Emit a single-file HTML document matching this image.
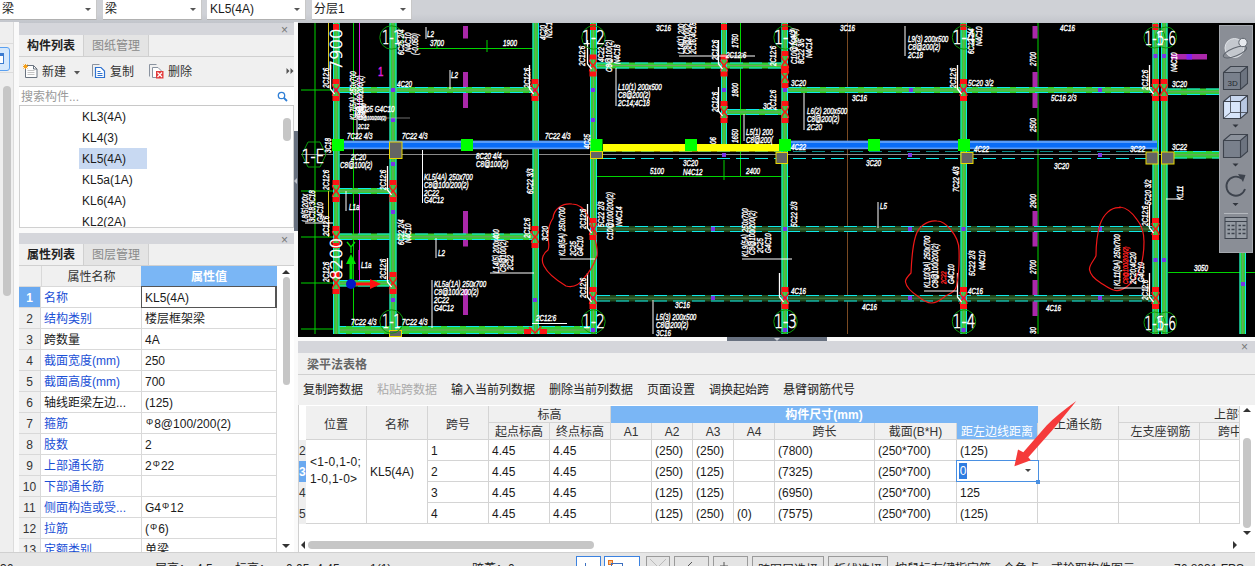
<!DOCTYPE html>
<html><head><meta charset="utf-8"><title>GTJ</title>
<style>
*{box-sizing:border-box;margin:0;padding:0}
html,body{width:1255px;height:566px;overflow:hidden}
body{background:#f0f0f0;font-family:"Liberation Sans","Noto Sans CJK SC",sans-serif;font-size:12px;color:#1a1a1a;position:relative}
.a{position:absolute}
.dd{position:absolute;top:0;height:20px;background:#fff;border-bottom:1px solid #b0b0b0;border-right:1px solid #c8c8c8;font-size:12px;line-height:19px;padding-left:2px;white-space:nowrap}
.dd i{position:absolute;right:5px;top:8px;width:0;height:0;border-left:3px solid transparent;border-right:3px solid transparent;border-top:3px solid #555}
.x{position:absolute;font-size:12px;color:#777;line-height:10px}
.tab{position:absolute;font-size:12px;line-height:23px;text-align:center;white-space:nowrap}
.li{position:absolute;left:82px;font-size:12px;line-height:23px;height:21px;white-space:nowrap}
.prow{position:absolute;left:19px;width:258px;height:21px;border-bottom:1px solid #d9d9d9;border-right:1px solid #d9d9d9;background:#fff;line-height:22px;font-size:12px}
.prow b{position:absolute;left:0;top:0;width:22px;height:20px;line-height:22px;overflow:hidden;background:#f0f0f0;border-right:1px solid #d9d9d9;text-align:center;font-weight:normal;color:#333}
.prow span{position:absolute;left:25px;top:0;width:97px;white-space:nowrap}
.prow u{position:absolute;left:122px;top:0;height:20px;width:1px;background:#d9d9d9}
.prow em{position:absolute;left:126px;top:0;font-style:normal;white-space:nowrap}
.bl{color:#1a4fd6}
.rb{font-size:9px;position:relative;top:-3px;margin:0 1px}
.tb{position:absolute;top:380px;line-height:20px;white-space:nowrap;color:#222}
.hc{position:absolute;background:#f0f0f0;border-right:1px solid #d4d4d4;border-bottom:1px solid #d4d4d4;text-align:center;white-space:nowrap;color:#333;overflow:hidden}
.c{position:absolute;background:#fff;border-right:1px solid #d4d4d4;border-bottom:1px solid #d4d4d4;line-height:22px;padding-left:3px;white-space:nowrap;overflow:hidden}
.rn{position:absolute;left:299px;width:7px;height:21px;line-height:22px;background:#eee;font-size:12px;color:#333;overflow:hidden}
.sb{position:absolute;top:552px;height:14px;line-height:34px;overflow:hidden;white-space:nowrap;color:#222;font-size:12px}
.sbtn{position:absolute;top:556px;height:12px;border:1px solid #9a9a9a;background:#e4e4e4}
svg text{font-family:"Liberation Sans","Noto Sans CJK SC",sans-serif}
</style></head><body>
<div class="a" style="left:0;top:0;width:1255px;height:23px;background:linear-gradient(#cfd1d6,#cfd1d6 60%,#c2c5cb)"></div>
<div class="dd" style="left:0;width:97px">梁<i></i></div>
<div class="dd" style="left:103px;width:99px">梁<i></i></div>
<div class="dd" style="left:207px;width:99px;padding-left:3px">KL5(4A)<i></i></div>
<div class="dd" style="left:312px;width:100px">分层1<i></i></div>
<div class="a" style="left:0;top:22px;width:14px;height:530px;background:#efefef;border-right:1px solid #dcdcdc"></div>
<div class="a" style="left:14px;top:22px;width:5px;height:530px;background:#fafafa"></div>
<div class="a" style="left:0;top:43px;width:13px;height:1px;background:#dcdcdc"></div>
<div class="a" style="left:0;top:72px;width:13px;height:1px;background:#dcdcdc"></div>
<div class="a" style="left:-6px;top:47px;width:16px;height:24px;border:1px solid #5aa0f0;border-radius:3px;background:#d5e8fc"></div>
<div class="a" style="left:-4px;top:53px;width:8px;height:11px;border:1px solid #3b7bd0;border-top:3px solid #3b7bd0;background:#fff"></div>
<div class="a" style="left:3px;top:86px;width:8px;height:210px;border-radius:4px;background:#c6c6c6"></div>
<div class="a" style="left:19px;top:23px;width:275px;height:12px;background:#d5d6db"></div>
<div class="x" style="left:281px;top:25px">×</div>
<div class="a" style="left:19px;top:35px;width:275px;height:22px;background:#f0f0f0;border-bottom:1px solid #d0d0d0"></div>
<div class="tab" style="left:19px;top:35px;width:64px;font-weight:bold;color:#222">构件列表</div>
<div class="tab" style="left:83px;top:35px;width:66px;height:21px;background:#e4e4e4;color:#8a8a8a;border-left:1px solid #d0d0d0;border-right:1px solid #d0d0d0">图纸管理</div>
<div class="a" style="left:19px;top:57px;width:275px;height:30px;background:#f0f0f0;border-bottom:1px solid #d0d0d0"></div>
<svg class="a" style="left:19px;top:57px" width="275" height="30" viewBox="0 0 275 30"><path d="M6.5 8.5h8l3.500 3.500v8.500h-11.500z" fill="#fdfdfd" stroke="#6a7480" stroke-width="1"/><path d="M14.500 8.500v3.500h3.500" fill="none" stroke="#6a7480"/><path d="M8.5 13.500h7M8.5 15.500h7M8.5 17.500h7" stroke="#c4c4c4" stroke-width="1"/><path d="M4.500 7.500l4 4M8.500 7.500l-4 4M6.500 7v5M4 9.500h5" stroke="#f5a01a" stroke-width="1"/><path d="M55 14h6l-3 3.500z" fill="#555"/><path d="M73.500 19.500v-12h7" fill="none" stroke="#8a93a0" stroke-width="1"/><path d="M76.500 10.500h5.500l3.500 3.500v6.500h-9z" fill="#fff" stroke="#2f72d0" stroke-width="1.200"/><path d="M78.500 14.500h3M78.500 16.500h5M78.500 18.500h5" stroke="#2f72d0" stroke-width="1"/><path d="M130.500 19.500v-12h7" fill="none" stroke="#8a93a0" stroke-width="1"/><path d="M133.500 10.500h5.500l3.500 3.500v6.500h-9z" fill="#fff" stroke="#8a93a0" stroke-width="1"/><rect x="137" y="14" width="7.500" height="7.500" fill="#e23b3b"/><path d="M138.500 15.500l4.500 4.500M143 15.500l-4.500 4.500" stroke="#fff" stroke-width="1.200"/><path d="M267.500 11l3 3-3 3zM271.500 11l3 3-3 3z" fill="#555"/></svg>
<div class="a" style="left:42px;top:62px;line-height:20px;color:#333">新建</div>
<div class="a" style="left:110px;top:62px;line-height:20px;color:#333">复制</div>
<div class="a" style="left:168px;top:62px;line-height:20px;color:#333">删除</div>
<div class="a" style="left:19px;top:87px;width:275px;height:19px;background:#fff;border-bottom:1px solid #c8c8c8;color:#999;line-height:20px;padding-left:2px">搜索构件...</div>
<svg class="a" style="left:274px;top:89px" width="16" height="16" viewBox="0 0 16 16"><circle cx="7.500" cy="6.500" r="3.200" fill="none" stroke="#2f7fd6" stroke-width="1.300"/><path d="M10 9l3 3" stroke="#2f7fd6" stroke-width="1.800"/></svg>
<div class="a" style="left:19px;top:106px;width:275px;height:122px;background:#fff;border:1px solid #d0d0d0;border-top:0"></div>
<div class="a" style="left:79px;top:148px;width:68px;height:21px;background:#c8d9f2"></div>
<div class="li" style="top:106px">KL3(4A)</div>
<div class="li" style="top:127px">KL4(3)</div>
<div class="li" style="top:148px">KL5(4A)</div>
<div class="li" style="top:169px">KL5a(1A)</div>
<div class="li" style="top:190px">KL6(4A)</div>
<div class="li" style="top:211px;height:16px;overflow:hidden">KL2(2A)</div>
<div class="a" style="left:283px;top:118px;width:8px;height:23px;border-radius:4px;background:#c6c6c6"></div>
<div class="a" style="left:294px;top:22px;width:4px;height:530px;background:#fafafa"></div>
<div class="a" style="left:294px;top:131px;width:4px;height:100px;background:#687180"></div>
<div class="a" style="left:294px;top:178px;width:0;height:0;border-top:3px solid transparent;border-bottom:3px solid transparent;border-right:3px solid #c0c4cc"></div>
<div class="a" style="left:19px;top:228px;width:275px;height:5px;background:#fafafa"></div>
<div class="a" style="left:19px;top:233px;width:275px;height:11px;background:#d5d6db"></div>
<div class="x" style="left:281px;top:235px">×</div>
<div class="a" style="left:19px;top:244px;width:275px;height:22px;background:#f0f0f0;border-bottom:1px solid #d0d0d0"></div>
<div class="tab" style="left:19px;top:244px;width:64px;font-weight:bold;color:#222">属性列表</div>
<div class="tab" style="left:83px;top:244px;width:66px;height:21px;background:#e4e4e4;color:#8a8a8a;border-left:1px solid #d0d0d0;border-right:1px solid #d0d0d0">图层管理</div>
<div class="a" style="left:19px;top:266px;width:275px;height:286px;background:#fff"></div>
<div class="a" style="left:19px;top:266px;width:258px;height:21px;background:#f0f0f0;border-bottom:1px solid #d9d9d9"></div>
<div class="a" style="left:41px;top:266px;width:100px;height:20px;line-height:22px;text-align:center;border-left:1px solid #d9d9d9;color:#333">属性名称</div>
<div class="a" style="left:141px;top:266px;width:136px;height:20px;line-height:22px;text-align:center;background:#7ab6f5;color:#fff;font-weight:bold">属性值</div>
<div class="prow" style="top:287px"><b style="background:#6aa9f0;color:#fff;font-weight:bold">1</b><span class="bl">名称</span><u></u><em>KL5(4A)</em></div>
<div class="prow" style="top:308px"><b>2</b><span class="bl">结构类别</span><u></u><em>楼层框架梁</em></div>
<div class="prow" style="top:329px"><b>3</b><span>跨数量</span><u></u><em>4A</em></div>
<div class="prow" style="top:350px"><b>4</b><span class="bl">截面宽度(mm)</span><u></u><em>250</em></div>
<div class="prow" style="top:371px"><b>5</b><span class="bl">截面高度(mm)</span><u></u><em>700</em></div>
<div class="prow" style="top:392px"><b>6</b><span>轴线距梁左边...</span><u></u><em>(125)</em></div>
<div class="prow" style="top:413px"><b>7</b><span class="bl">箍筋</span><u></u><em><i class="rb" style="font-style:normal">Φ</i>8@100/200(2)</em></div>
<div class="prow" style="top:434px"><b>8</b><span class="bl">肢数</span><u></u><em>2</em></div>
<div class="prow" style="top:455px"><b>9</b><span class="bl">上部通长筋</span><u></u><em>2<i class="rb" style="font-style:normal">Φ</i>22</em></div>
<div class="prow" style="top:476px"><b>10</b><span class="bl">下部通长筋</span><u></u><em></em></div>
<div class="prow" style="top:497px"><b>11</b><span class="bl">侧面构造或受...</span><u></u><em>G4<i class="rb" style="font-style:normal">Φ</i>12</em></div>
<div class="prow" style="top:518px"><b>12</b><span class="bl">拉筋</span><u></u><em>(<i class="rb" style="font-style:normal">Φ</i>6)</em></div>
<div class="prow" style="top:539px"><b>13</b><span class="bl">定额类别</span><u></u><em>单梁</em></div>
<div class="a" style="left:141px;top:286px;width:136px;height:22px;border:1px solid #555;border-right-width:2px"></div>
<div class="a" style="left:282px;top:270px;width:0;height:0;border-left:4px solid transparent;border-right:4px solid transparent;border-bottom:4px solid #333"></div>
<div class="a" style="left:283px;top:277px;width:7px;height:108px;border-radius:4px;background:#c6c6c6"></div>
<div class="a" style="left:282px;top:544px;width:0;height:0;border-left:4px solid transparent;border-right:4px solid transparent;border-top:4px solid #333"></div>
<svg class="a" style="left:298px;top:23px" width="957" height="314" viewBox="298 23 957 314">
<style>.th{font-family:"DejaVu Sans Light","DejaVu Sans","Liberation Sans",sans-serif;font-weight:200}</style>
<rect x="298" y="23" width="957" height="314" fill="#000"/>
<path d="M315.0 23.0L315.0 334.0" stroke="#00d400" stroke-width="1"/>
<path d="M353.5 23.0L353.5 334.0" stroke="#00d400" stroke-width="1"/>
<path d="M1038.0 23.0L1038.0 334.0" stroke="#00d400" stroke-width="1"/>
<path d="M301.0 90.0L333.0 90.0" stroke="#00d400" stroke-width="1"/>
<path d="M301.0 191.0L333.0 191.0" stroke="#00d400" stroke-width="1"/>
<path d="M301.0 237.0L333.0 237.0" stroke="#00d400" stroke-width="1"/>
<path d="M301.0 283.0L333.0 283.0" stroke="#00d400" stroke-width="1"/>
<path d="M301.0 329.0L333.0 329.0" stroke="#00d400" stroke-width="1"/>
<path d="M418.0 48.5L533.0 48.5" stroke="#00d400" stroke-width="1"/>
<path d="M437.0 40.0L437.0 48.0" stroke="#00d400" stroke-width="1"/>
<path d="M487.0 40.0L487.0 52.0" stroke="#00d400" stroke-width="1"/>
<path d="M740.5 23.0L740.5 176.0" stroke="#00d400" stroke-width="1"/>
<path d="M597.0 176.5L790.0 176.5" stroke="#00d400" stroke-width="1"/>
<path d="M724.0 160.0L724.0 180.0" stroke="#00d400" stroke-width="1"/>
<path d="M1168.0 272.5L1255.0 272.5" stroke="#00d400" stroke-width="1"/>
<path d="M1010.0 154.5L1038.0 154.5" stroke="#00d400" stroke-width="1"/>
<path d="M847.5 23.0L847.5 334.0" stroke="#7a4a22" stroke-width="1"/>
<path d="M301.0 154.5L1219.0 154.5" stroke="#8a8a8a" stroke-width="1"/>
<path d="M359.5 23.0L359.5 119.0" stroke="#e020e0" stroke-width="1"/>
<path d="M359.5 194.0L359.5 280.0" stroke="#e020e0" stroke-width="1"/>
<rect x="463.0" y="26.0" width="5.0" height="12.5" fill="#aa28aa"/>
<rect x="463.0" y="72.0" width="5.0" height="36.0" fill="#aa28aa"/>
<rect x="463.0" y="211.0" width="5.0" height="35.5" fill="#aa28aa"/>
<rect x="463.0" y="289.0" width="5.0" height="26.0" fill="#aa28aa"/>
<rect x="1032.5" y="26.0" width="5.0" height="12.5" fill="#aa28aa"/>
<rect x="1032.5" y="72.0" width="5.0" height="36.0" fill="#aa28aa"/>
<rect x="1032.5" y="211.0" width="5.0" height="35.5" fill="#aa28aa"/>
<rect x="1032.5" y="280.0" width="5.0" height="36.0" fill="#aa28aa"/>
<rect x="1171.0" y="54.0" width="36.0" height="5.5" fill="#aa28aa"/>
<rect x="1186.5" y="54.0" width="5.5" height="5.5" fill="#8020f0"/>
<path d="M603.0 151.5L1146.0 151.5" stroke="#0a8a8a" stroke-width="1" stroke-dasharray="13 6"/>
<path d="M603.0 158.5L1146.0 158.5" stroke="#10e8e8" stroke-width="1" stroke-dasharray="13 6"/>
<rect x="339.0" y="87.0" width="194.0" height="6.0" fill="#32cd32"/>
<path d="M339.0 87.5H533.0M339.0 92.5H533.0" stroke="#10e8e8" stroke-width="1" stroke-dasharray="13 6"/>
<path d="M339.0 90.0H533.0" stroke="#7a9a6a" stroke-width="1"/>
<rect x="597.0" y="62.5" width="185.0" height="6.0" fill="#32cd32"/>
<path d="M597.0 63.0H782.0M597.0 68.0H782.0" stroke="#10e8e8" stroke-width="1" stroke-dasharray="13 6"/>
<path d="M597.0 65.5H782.0" stroke="#7a9a6a" stroke-width="1"/>
<rect x="727.0" y="109.0" width="55.0" height="6.0" fill="#32cd32"/>
<path d="M727.0 109.5H782.0M727.0 114.5H782.0" stroke="#10e8e8" stroke-width="1" stroke-dasharray="13 6"/>
<path d="M727.0 112.0H782.0" stroke="#7a9a6a" stroke-width="1"/>
<rect x="788.0" y="87.0" width="364.0" height="6.0" fill="#32cd32"/>
<path d="M788.0 87.5H1152.0M788.0 92.5H1152.0" stroke="#10e8e8" stroke-width="1" stroke-dasharray="13 6"/>
<path d="M788.0 90.0H1152.0" stroke="#7a9a6a" stroke-width="1"/>
<rect x="1168.0" y="88.5" width="51.0" height="6.5" fill="#32cd32"/>
<path d="M1168.0 89.0H1219.0M1168.0 94.5H1219.0" stroke="#10e8e8" stroke-width="1" stroke-dasharray="13 6"/>
<path d="M1168.0 91.8H1219.0" stroke="#7a9a6a" stroke-width="1"/>
<rect x="339.0" y="188.0" width="50.0" height="6.0" fill="#32cd32"/>
<path d="M339.0 188.5H389.0M339.0 193.5H389.0" stroke="#10e8e8" stroke-width="1" stroke-dasharray="13 6"/>
<path d="M339.0 191.0H389.0" stroke="#7a9a6a" stroke-width="1"/>
<rect x="339.0" y="233.5" width="194.0" height="6.5" fill="#32cd32"/>
<path d="M339.0 234.0H533.0M339.0 239.5H533.0" stroke="#10e8e8" stroke-width="1" stroke-dasharray="13 6"/>
<path d="M339.0 236.8H533.0" stroke="#7a9a6a" stroke-width="1"/>
<rect x="339.0" y="280.0" width="50.0" height="6.5" fill="#32cd32"/>
<path d="M339.0 280.5H389.0M339.0 286.0H389.0" stroke="#10e8e8" stroke-width="1" stroke-dasharray="13 6"/>
<path d="M339.0 283.2H389.0" stroke="#7a9a6a" stroke-width="1"/>
<rect x="333.0" y="326.0" width="264.0" height="8.0" fill="#32cd32"/>
<path d="M333.0 326.5H597.0M333.0 333.5H597.0" stroke="#10e8e8" stroke-width="1" stroke-dasharray="13 6"/>
<path d="M333.0 330.0H597.0" stroke="#7a9a6a" stroke-width="1"/>
<rect x="597.0" y="226.0" width="555.0" height="6.0" fill="#1e4a1e"/>
<path d="M597.0 226.5H1152.0M597.0 231.5H1152.0" stroke="#10e8e8" stroke-width="1" stroke-dasharray="13 6"/>
<path d="M597.0 229.0H1152.0" stroke="#4a7a40" stroke-width="1"/>
<rect x="597.0" y="295.0" width="555.0" height="6.5" fill="#1e4a1e"/>
<path d="M597.0 295.5H1152.0M597.0 301.0H1152.0" stroke="#10e8e8" stroke-width="1" stroke-dasharray="13 6"/>
<path d="M597.0 298.2H1152.0" stroke="#4a7a40" stroke-width="1"/>
<rect x="1174.0" y="151.0" width="45.0" height="7.5" fill="#32cd32"/>
<path d="M1174.0 151.5H1219.0M1174.0 158.0H1219.0" stroke="#10e8e8" stroke-width="1" stroke-dasharray="13 6"/>
<path d="M1174.0 154.8H1219.0" stroke="#7a9a6a" stroke-width="1"/>
<rect x="333.0" y="23.0" width="6.5" height="311.0" fill="#32cd32"/>
<path d="M333.5 23.0V334.0M339.0 23.0V334.0" stroke="#10e8e8" stroke-width="1"/>
<path d="M336.2 23.0V334.0" stroke="#7a9a6a" stroke-width="1"/>
<rect x="389.5" y="23.0" width="7.0" height="311.0" fill="#32cd32"/>
<path d="M390.0 23.0V334.0M396.0 23.0V334.0" stroke="#10e8e8" stroke-width="1"/>
<path d="M393.0 23.0V334.0" stroke="#7a9a6a" stroke-width="1"/>
<rect x="532.5" y="23.0" width="6.5" height="311.0" fill="#32cd32"/>
<path d="M533.0 23.0V334.0M538.5 23.0V334.0" stroke="#10e8e8" stroke-width="1"/>
<path d="M535.8 23.0V334.0" stroke="#7a9a6a" stroke-width="1"/>
<rect x="590.0" y="23.0" width="7.0" height="311.0" fill="#32cd32"/>
<path d="M590.5 23.0V334.0M596.5 23.0V334.0" stroke="#10e8e8" stroke-width="1"/>
<path d="M593.5 23.0V334.0" stroke="#7a9a6a" stroke-width="1"/>
<rect x="721.0" y="23.0" width="6.0" height="122.0" fill="#32cd32"/>
<path d="M721.5 23.0V145.0M726.5 23.0V145.0" stroke="#10e8e8" stroke-width="1"/>
<path d="M724.0 23.0V145.0" stroke="#7a9a6a" stroke-width="1"/>
<rect x="781.5" y="23.0" width="6.5" height="311.0" fill="#32cd32"/>
<path d="M782.0 23.0V334.0M787.5 23.0V334.0" stroke="#10e8e8" stroke-width="1"/>
<path d="M784.8 23.0V334.0" stroke="#7a9a6a" stroke-width="1"/>
<rect x="960.5" y="23.0" width="6.5" height="311.0" fill="#32cd32"/>
<path d="M961.0 23.0V334.0M966.5 23.0V334.0" stroke="#10e8e8" stroke-width="1"/>
<path d="M963.8 23.0V334.0" stroke="#7a9a6a" stroke-width="1"/>
<rect x="1152.5" y="23.0" width="6.5" height="311.0" fill="#32cd32"/>
<path d="M1153.0 23.0V334.0M1158.5 23.0V334.0" stroke="#10e8e8" stroke-width="1"/>
<path d="M1155.8 23.0V334.0" stroke="#7a9a6a" stroke-width="1"/>
<rect x="1161.0" y="23.0" width="6.5" height="311.0" fill="#32cd32"/>
<path d="M1161.5 23.0V334.0M1167.0 23.0V334.0" stroke="#10e8e8" stroke-width="1"/>
<path d="M1164.2 23.0V334.0" stroke="#7a9a6a" stroke-width="1"/>
<rect x="1239.5" y="253.0" width="6.5" height="81.0" fill="#32cd32"/>
<path d="M1240.0 253.0V334.0M1245.5 253.0V334.0" stroke="#10e8e8" stroke-width="1"/>
<path d="M1242.8 253.0V334.0" stroke="#7a9a6a" stroke-width="1"/>
<rect x="339.0" y="140.6" width="250.0" height="8.6" fill="#5a9bf5"/>
<rect x="339.0" y="143.0" width="250.0" height="4.5" fill="#0a6cf5"/>
<rect x="788.0" y="140.6" width="369.0" height="8.6" fill="#5a9bf5"/>
<rect x="788.0" y="143.0" width="369.0" height="4.5" fill="#0a6cf5"/>
<rect x="603.0" y="144.0" width="178.0" height="7.5" fill="#ffff00"/>
<rect x="334.0" y="88.0" width="4.0" height="4.0" fill="#7a35e6"/>
<rect x="391.0" y="88.0" width="4.0" height="4.0" fill="#7a35e6"/>
<rect x="391.0" y="118.0" width="4.0" height="4.0" fill="#7a35e6"/>
<rect x="391.0" y="162.0" width="4.0" height="4.0" fill="#7a35e6"/>
<rect x="533.0" y="88.0" width="4.0" height="4.0" fill="#7a35e6"/>
<rect x="591.0" y="88.0" width="4.0" height="4.0" fill="#7a35e6"/>
<rect x="591.0" y="118.0" width="4.0" height="4.0" fill="#7a35e6"/>
<rect x="722.0" y="88.0" width="4.0" height="4.0" fill="#7a35e6"/>
<rect x="783.0" y="88.0" width="4.0" height="4.0" fill="#7a35e6"/>
<rect x="961.5" y="88.0" width="4.0" height="4.0" fill="#7a35e6"/>
<rect x="909.0" y="88.0" width="4.0" height="4.0" fill="#7a35e6"/>
<rect x="1153.5" y="54.0" width="4.0" height="4.0" fill="#7a35e6"/>
<rect x="1162.0" y="54.0" width="4.0" height="4.0" fill="#7a35e6"/>
<rect x="391.0" y="210.0" width="4.0" height="4.0" fill="#7a35e6"/>
<rect x="391.0" y="298.0" width="4.0" height="4.0" fill="#7a35e6"/>
<rect x="533.0" y="298.0" width="4.0" height="4.0" fill="#7a35e6"/>
<rect x="591.0" y="227.0" width="4.0" height="4.0" fill="#7a35e6"/>
<rect x="591.0" y="296.0" width="4.0" height="4.0" fill="#7a35e6"/>
<rect x="591.0" y="328.0" width="4.0" height="4.0" fill="#7a35e6"/>
<rect x="711.0" y="227.0" width="4.0" height="4.0" fill="#7a35e6"/>
<rect x="711.0" y="296.0" width="4.0" height="4.0" fill="#7a35e6"/>
<rect x="783.0" y="227.0" width="4.0" height="4.0" fill="#7a35e6"/>
<rect x="783.0" y="296.0" width="4.0" height="4.0" fill="#7a35e6"/>
<rect x="783.0" y="328.0" width="4.0" height="4.0" fill="#7a35e6"/>
<rect x="908.0" y="227.0" width="4.0" height="4.0" fill="#7a35e6"/>
<rect x="908.0" y="296.0" width="4.0" height="4.0" fill="#7a35e6"/>
<rect x="961.5" y="227.0" width="4.0" height="4.0" fill="#7a35e6"/>
<rect x="961.5" y="296.0" width="4.0" height="4.0" fill="#7a35e6"/>
<rect x="961.5" y="328.0" width="4.0" height="4.0" fill="#7a35e6"/>
<rect x="1098.0" y="227.0" width="4.0" height="4.0" fill="#7a35e6"/>
<rect x="1098.0" y="296.0" width="4.0" height="4.0" fill="#7a35e6"/>
<rect x="1153.5" y="258.0" width="4.0" height="4.0" fill="#7a35e6"/>
<rect x="1162.0" y="258.0" width="4.0" height="4.0" fill="#7a35e6"/>
<rect x="908.0" y="153.0" width="4.0" height="4.0" fill="#7a35e6"/>
<rect x="591.0" y="153.0" width="4.0" height="4.0" fill="#7a35e6"/>
<rect x="722.0" y="153.0" width="4.0" height="4.0" fill="#7a35e6"/>
<rect x="1098.0" y="153.0" width="4.0" height="4.0" fill="#7a35e6"/>
<rect x="1241.0" y="282.0" width="4.0" height="4.0" fill="#7a35e6"/>
<rect x="1098.0" y="88.0" width="4.0" height="4.0" fill="#7a35e6"/>
<rect x="332.5" y="79.0" width="7.0" height="5.0" fill="#ff1414"/>
<rect x="332.5" y="96.0" width="7.0" height="5.0" fill="#ff1414"/>
<path d="M332.5 84.0C332.5 90.0 339.5 90.0 339.5 96.0M339.5 84.0C339.5 90.0 332.5 90.0 332.5 96.0" stroke="#ff1414" stroke-width="1.300" fill="none"/>
<rect x="332.5" y="180.0" width="7.0" height="5.0" fill="#ff1414"/>
<rect x="332.5" y="197.0" width="7.0" height="5.0" fill="#ff1414"/>
<path d="M332.5 185.0C332.5 191.0 339.5 191.0 339.5 197.0M339.5 185.0C339.5 191.0 332.5 191.0 332.5 197.0" stroke="#ff1414" stroke-width="1.300" fill="none"/>
<rect x="332.5" y="226.0" width="7.0" height="5.0" fill="#ff1414"/>
<rect x="332.5" y="243.0" width="7.0" height="5.0" fill="#ff1414"/>
<path d="M332.5 231.0C332.5 237.0 339.5 237.0 339.5 243.0M339.5 231.0C339.5 237.0 332.5 237.0 332.5 243.0" stroke="#ff1414" stroke-width="1.300" fill="none"/>
<rect x="389.5" y="180.0" width="7.0" height="5.0" fill="#ff1414"/>
<rect x="389.5" y="197.0" width="7.0" height="5.0" fill="#ff1414"/>
<path d="M389.5 185.0C389.5 191.0 396.5 191.0 396.5 197.0M396.5 185.0C396.5 191.0 389.5 191.0 389.5 197.0" stroke="#ff1414" stroke-width="1.300" fill="none"/>
<rect x="389.5" y="272.0" width="7.0" height="5.0" fill="#ff1414"/>
<rect x="389.5" y="289.0" width="7.0" height="5.0" fill="#ff1414"/>
<path d="M389.5 277.0C389.5 283.0 396.5 283.0 396.5 289.0M396.5 277.0C396.5 283.0 389.5 283.0 389.5 289.0" stroke="#ff1414" stroke-width="1.300" fill="none"/>
<rect x="332.5" y="272.0" width="7.0" height="5.0" fill="#ff1414"/>
<rect x="332.5" y="289.0" width="7.0" height="5.0" fill="#ff1414"/>
<path d="M332.5 277.0C332.5 283.0 339.5 283.0 339.5 289.0M339.5 277.0C339.5 283.0 332.5 283.0 332.5 289.0" stroke="#ff1414" stroke-width="1.300" fill="none"/>
<rect x="531.5" y="79.0" width="7.0" height="5.0" fill="#ff1414"/>
<rect x="531.5" y="96.0" width="7.0" height="5.0" fill="#ff1414"/>
<path d="M531.5 84.0C531.5 90.0 538.5 90.0 538.5 96.0M538.5 84.0C538.5 90.0 531.5 90.0 531.5 96.0" stroke="#ff1414" stroke-width="1.300" fill="none"/>
<rect x="589.5" y="54.5" width="7.0" height="5.0" fill="#ff1414"/>
<rect x="589.5" y="71.5" width="7.0" height="5.0" fill="#ff1414"/>
<path d="M589.5 59.5C589.5 65.5 596.5 65.5 596.5 71.5M596.5 59.5C596.5 65.5 589.5 65.5 589.5 71.5" stroke="#ff1414" stroke-width="1.300" fill="none"/>
<rect x="720.5" y="54.5" width="7.0" height="5.0" fill="#ff1414"/>
<rect x="720.5" y="71.5" width="7.0" height="5.0" fill="#ff1414"/>
<path d="M720.5 59.5C720.5 65.5 727.5 65.5 727.5 71.5M727.5 59.5C727.5 65.5 720.5 65.5 720.5 71.5" stroke="#ff1414" stroke-width="1.300" fill="none"/>
<rect x="720.5" y="101.0" width="7.0" height="5.0" fill="#ff1414"/>
<rect x="720.5" y="118.0" width="7.0" height="5.0" fill="#ff1414"/>
<path d="M720.5 106.0C720.5 112.0 727.5 112.0 727.5 118.0M727.5 106.0C727.5 112.0 720.5 112.0 720.5 118.0" stroke="#ff1414" stroke-width="1.300" fill="none"/>
<rect x="781.5" y="51.0" width="7.0" height="5.0" fill="#ff1414"/>
<rect x="781.5" y="68.0" width="7.0" height="5.0" fill="#ff1414"/>
<path d="M781.5 56.0C781.5 62.0 788.5 62.0 788.5 68.0M788.5 56.0C788.5 62.0 781.5 62.0 781.5 68.0" stroke="#ff1414" stroke-width="1.300" fill="none"/>
<rect x="781.5" y="66.0" width="7.0" height="5.0" fill="#ff1414"/>
<rect x="781.5" y="83.0" width="7.0" height="5.0" fill="#ff1414"/>
<path d="M781.5 71.0C781.5 77.0 788.5 77.0 788.5 83.0M788.5 71.0C788.5 77.0 781.5 77.0 781.5 83.0" stroke="#ff1414" stroke-width="1.300" fill="none"/>
<rect x="781.5" y="101.0" width="7.0" height="5.0" fill="#ff1414"/>
<rect x="781.5" y="118.0" width="7.0" height="5.0" fill="#ff1414"/>
<path d="M781.5 106.0C781.5 112.0 788.5 112.0 788.5 118.0M788.5 106.0C788.5 112.0 781.5 112.0 781.5 118.0" stroke="#ff1414" stroke-width="1.300" fill="none"/>
<rect x="960.0" y="79.0" width="7.0" height="5.0" fill="#ff1414"/>
<rect x="960.0" y="96.0" width="7.0" height="5.0" fill="#ff1414"/>
<path d="M960.0 84.0C960.0 90.0 967.0 90.0 967.0 96.0M967.0 84.0C967.0 90.0 960.0 90.0 960.0 96.0" stroke="#ff1414" stroke-width="1.300" fill="none"/>
<rect x="1152.0" y="79.0" width="7.0" height="5.0" fill="#ff1414"/>
<rect x="1152.0" y="96.0" width="7.0" height="5.0" fill="#ff1414"/>
<path d="M1152.0 84.0C1152.0 90.0 1159.0 90.0 1159.0 96.0M1159.0 84.0C1159.0 90.0 1152.0 90.0 1152.0 96.0" stroke="#ff1414" stroke-width="1.300" fill="none"/>
<rect x="1160.5" y="79.0" width="7.0" height="5.0" fill="#ff1414"/>
<rect x="1160.5" y="96.0" width="7.0" height="5.0" fill="#ff1414"/>
<path d="M1160.5 84.0C1160.5 90.0 1167.5 90.0 1167.5 96.0M1167.5 84.0C1167.5 90.0 1160.5 90.0 1160.5 96.0" stroke="#ff1414" stroke-width="1.300" fill="none"/>
<rect x="589.5" y="218.0" width="7.0" height="5.0" fill="#ff1414"/>
<rect x="589.5" y="235.0" width="7.0" height="5.0" fill="#ff1414"/>
<path d="M589.5 223.0C589.5 229.0 596.5 229.0 596.5 235.0M596.5 223.0C596.5 229.0 589.5 229.0 589.5 235.0" stroke="#ff1414" stroke-width="1.300" fill="none"/>
<rect x="589.5" y="287.0" width="7.0" height="5.0" fill="#ff1414"/>
<rect x="589.5" y="304.0" width="7.0" height="5.0" fill="#ff1414"/>
<path d="M589.5 292.0C589.5 298.0 596.5 298.0 596.5 304.0M596.5 292.0C596.5 298.0 589.5 298.0 589.5 304.0" stroke="#ff1414" stroke-width="1.300" fill="none"/>
<rect x="531.5" y="226.0" width="7.0" height="5.0" fill="#ff1414"/>
<rect x="531.5" y="243.0" width="7.0" height="5.0" fill="#ff1414"/>
<path d="M531.5 231.0C531.5 237.0 538.5 237.0 538.5 243.0M538.5 231.0C538.5 237.0 531.5 237.0 531.5 243.0" stroke="#ff1414" stroke-width="1.300" fill="none"/>
<rect x="781.5" y="287.0" width="7.0" height="5.0" fill="#ff1414"/>
<rect x="781.5" y="304.0" width="7.0" height="5.0" fill="#ff1414"/>
<path d="M781.5 292.0C781.5 298.0 788.5 298.0 788.5 304.0M788.5 292.0C788.5 298.0 781.5 298.0 781.5 304.0" stroke="#ff1414" stroke-width="1.300" fill="none"/>
<rect x="960.0" y="287.0" width="7.0" height="5.0" fill="#ff1414"/>
<rect x="960.0" y="304.0" width="7.0" height="5.0" fill="#ff1414"/>
<path d="M960.0 292.0C960.0 298.0 967.0 298.0 967.0 304.0M967.0 292.0C967.0 298.0 960.0 298.0 960.0 304.0" stroke="#ff1414" stroke-width="1.300" fill="none"/>
<rect x="1152.0" y="218.0" width="7.0" height="5.0" fill="#ff1414"/>
<rect x="1152.0" y="235.0" width="7.0" height="5.0" fill="#ff1414"/>
<path d="M1152.0 223.0C1152.0 229.0 1159.0 229.0 1159.0 235.0M1159.0 223.0C1159.0 229.0 1152.0 229.0 1152.0 235.0" stroke="#ff1414" stroke-width="1.300" fill="none"/>
<rect x="1152.0" y="287.0" width="7.0" height="5.0" fill="#ff1414"/>
<rect x="1152.0" y="304.0" width="7.0" height="5.0" fill="#ff1414"/>
<path d="M1152.0 292.0C1152.0 298.0 1159.0 298.0 1159.0 304.0M1159.0 292.0C1159.0 298.0 1152.0 298.0 1152.0 304.0" stroke="#ff1414" stroke-width="1.300" fill="none"/>
<rect x="333.0" y="24.0" width="6.0" height="6.0" fill="#ff1414"/>
<rect x="590.0" y="24.0" width="6.0" height="6.0" fill="#ff1414"/>
<rect x="721.0" y="24.0" width="6.0" height="6.0" fill="#ff1414"/>
<rect x="782.0" y="24.0" width="6.0" height="6.0" fill="#ff1414"/>
<rect x="960.5" y="24.0" width="6.0" height="6.0" fill="#ff1414"/>
<rect x="1152.5" y="24.0" width="6.0" height="6.0" fill="#ff1414"/>
<rect x="524.0" y="329.0" width="7.0" height="5.0" fill="#ff1414"/>
<rect x="540.0" y="329.0" width="7.0" height="5.0" fill="#ff1414"/>
<path d="M529 327l6 6 6-6" stroke="#ff1414" stroke-width="1.500" fill="none"/>
<path d="M330.5 65.0v24l4 5" stroke="#fff" stroke-width="1.300" fill="none"/>
<path d="M387.5 258.0v24l4 5" stroke="#fff" stroke-width="1.300" fill="none"/>
<path d="M529.5 65.0v24l4 5" stroke="#fff" stroke-width="1.300" fill="none"/>
<path d="M587.5 40.0v24l4 5" stroke="#fff" stroke-width="1.300" fill="none"/>
<path d="M718.5 40.0v24l4 5" stroke="#fff" stroke-width="1.300" fill="none"/>
<path d="M718.5 87.0v24l4 5" stroke="#fff" stroke-width="1.300" fill="none"/>
<path d="M957.5 65.0v24l4 5" stroke="#fff" stroke-width="1.300" fill="none"/>
<path d="M1149.5 65.0v24l4 5" stroke="#fff" stroke-width="1.300" fill="none"/>
<path d="M587.5 204.0v24l4 5" stroke="#fff" stroke-width="1.300" fill="none"/>
<path d="M587.5 273.0v24l4 5" stroke="#fff" stroke-width="1.300" fill="none"/>
<path d="M779.5 273.0v24l4 5" stroke="#fff" stroke-width="1.300" fill="none"/>
<path d="M957.5 273.0v24l4 5" stroke="#fff" stroke-width="1.300" fill="none"/>
<path d="M1149.5 204.0v24l4 5" stroke="#fff" stroke-width="1.300" fill="none"/>
<path d="M1149.5 273.0v24l4 5" stroke="#fff" stroke-width="1.300" fill="none"/>
<path d="M387.5 166.0v24l4 5" stroke="#fff" stroke-width="1.300" fill="none"/>
<rect x="332.0" y="139.0" width="12.0" height="12.0" fill="#00ff00"/>
<rect x="461.0" y="139.0" width="12.0" height="12.0" fill="#00ff00"/>
<rect x="590.5" y="139.0" width="12.0" height="12.0" fill="#00ff00"/>
<rect x="685.0" y="139.0" width="12.0" height="12.0" fill="#00ff00"/>
<rect x="779.0" y="139.0" width="12.0" height="12.0" fill="#00ff00"/>
<rect x="868.0" y="139.0" width="12.0" height="12.0" fill="#00ff00"/>
<rect x="958.0" y="139.0" width="12.0" height="12.0" fill="#00ff00"/>
<rect x="389.5" y="142.0" width="12.5" height="16.5" fill="#646464" stroke="#e8d800" stroke-width="1"/>
<rect x="590.5" y="151.5" width="12.0" height="7.0" fill="#646464" stroke="#e8d800" stroke-width="1"/>
<rect x="776.0" y="152.5" width="11.5" height="11.0" fill="#646464" stroke="#e8d800" stroke-width="1"/>
<rect x="961.0" y="152.5" width="12.0" height="11.0" fill="#646464" stroke="#e8d800" stroke-width="1"/>
<rect x="1146.0" y="152.0" width="12.0" height="12.0" fill="#646464" stroke="#e8d800" stroke-width="1"/>
<rect x="1161.5" y="152.0" width="12.5" height="12.0" fill="#646464" stroke="#e8d800" stroke-width="1"/>
<rect x="389.5" y="330.5" width="12.0" height="6.0" fill="#646464" stroke="#e8d800" stroke-width="1"/>
<circle cx="391.5" cy="37.5" r="11.7" fill="none" stroke="#0a9a0a" stroke-width="1"/>
<text class="th" x="391.5" y="44.0" font-size="19" fill="#fff" stroke="#fff" stroke-width="0.550" text-anchor="middle" textLength="19" lengthAdjust="spacingAndGlyphs">1-1</text>
<circle cx="391.5" cy="321.5" r="11.7" fill="none" stroke="#0a9a0a" stroke-width="1"/>
<text class="th" x="391.5" y="328.0" font-size="19" fill="#fff" stroke="#fff" stroke-width="0.550" text-anchor="middle" textLength="19" lengthAdjust="spacingAndGlyphs">1-1</text>
<circle cx="593.5" cy="37.5" r="11.7" fill="none" stroke="#0a9a0a" stroke-width="1"/>
<text class="th" x="593.5" y="44.0" font-size="19" fill="#fff" stroke="#fff" stroke-width="0.550" text-anchor="middle" textLength="23" lengthAdjust="spacingAndGlyphs">1-2</text>
<circle cx="593.5" cy="321.5" r="11.7" fill="none" stroke="#0a9a0a" stroke-width="1"/>
<text class="th" x="593.5" y="328.0" font-size="19" fill="#fff" stroke="#fff" stroke-width="0.550" text-anchor="middle" textLength="23" lengthAdjust="spacingAndGlyphs">1-2</text>
<circle cx="785.5" cy="37.5" r="11.7" fill="none" stroke="#0a9a0a" stroke-width="1"/>
<text class="th" x="785.5" y="44.0" font-size="19" fill="#fff" stroke="#fff" stroke-width="0.550" text-anchor="middle" textLength="23" lengthAdjust="spacingAndGlyphs">1-3</text>
<circle cx="785.5" cy="321.5" r="11.7" fill="none" stroke="#0a9a0a" stroke-width="1"/>
<text class="th" x="785.5" y="328.0" font-size="19" fill="#fff" stroke="#fff" stroke-width="0.550" text-anchor="middle" textLength="23" lengthAdjust="spacingAndGlyphs">1-3</text>
<circle cx="964.0" cy="37.5" r="11.7" fill="none" stroke="#0a9a0a" stroke-width="1"/>
<text class="th" x="964.0" y="44.0" font-size="19" fill="#fff" stroke="#fff" stroke-width="0.550" text-anchor="middle" textLength="23" lengthAdjust="spacingAndGlyphs">1-4</text>
<circle cx="964.0" cy="321.5" r="11.7" fill="none" stroke="#0a9a0a" stroke-width="1"/>
<text class="th" x="964.0" y="328.0" font-size="19" fill="#fff" stroke="#fff" stroke-width="0.550" text-anchor="middle" textLength="23" lengthAdjust="spacingAndGlyphs">1-4</text>
<circle cx="1154.500" cy="37.5" r="10.500" fill="none" stroke="#0a9a0a"/><circle cx="1166" cy="37.5" r="10.500" fill="none" stroke="#0a9a0a"/>
<text class="th" x="1154.500" y="44.5" font-size="19" fill="#fff" stroke="#fff" stroke-width="0.550" text-anchor="middle" textLength="20" lengthAdjust="spacingAndGlyphs">1-5</text>
<text class="th" x="1166" y="44.5" font-size="19" fill="#fff" stroke="#fff" stroke-width="0.550" text-anchor="middle" textLength="20" lengthAdjust="spacingAndGlyphs">1-6</text>
<circle cx="1154.500" cy="322.5" r="10.500" fill="none" stroke="#0a9a0a"/><circle cx="1166" cy="322.5" r="10.500" fill="none" stroke="#0a9a0a"/>
<text class="th" x="1154.500" y="329.5" font-size="19" fill="#fff" stroke="#fff" stroke-width="0.550" text-anchor="middle" textLength="20" lengthAdjust="spacingAndGlyphs">1-5</text>
<text class="th" x="1166" y="329.5" font-size="19" fill="#fff" stroke="#fff" stroke-width="0.550" text-anchor="middle" textLength="20" lengthAdjust="spacingAndGlyphs">1-6</text>
<path d="M302 154.500l6-12.500h12l6 12.500-6 12.500h-12z" fill="none" stroke="#0a9a0a"/>
<text class="th" x="313" y="162.500" font-size="19.500" fill="#fff" stroke="#fff" stroke-width="0.550" text-anchor="middle" textLength="22.500" lengthAdjust="spacingAndGlyphs">1-E</text>
<text class="th" transform="translate(342.0 70.5) rotate(-90) scale(1.0 1)" font-size="16.5" fill="#fff" stroke="#fff" stroke-width="0.5">7900</text>
<text class="th" transform="translate(342.0 280.0) rotate(-90) scale(1.0 1)" font-size="16.5" fill="#fff" stroke="#fff" stroke-width="0.5">8200</text>
<path d="M328.5 23.0L328.5 75.0" stroke="#d8c820" stroke-width="1"/>
<path d="M328.5 191.0L328.5 237.0" stroke="#d8c820" stroke-width="1"/>
<path d="M351 284V262" stroke="#00e000" stroke-width="3"/><path d="M346 264l5-10 5 10z" fill="#00e000"/>
<path d="M351 284H372" stroke="#ff1010" stroke-width="3"/><path d="M370 279l11 5-11 5z" fill="#ff1010"/>
<circle cx="351" cy="284" r="5" fill="#0018c8"/>
<path d="M347 242l4 5 4-5M351 247v6" stroke="#00e000" stroke-width="1.300" fill="none"/>
<path d="M572 204c-10-1-18 5-19 14c-4 6-5 12-5 18c0 6 2 10 0 14c-6 4-7 11-4 16c4 8 12 14 22 20c8 2 14-2 18-8c6-6 10-14 13-22c1-8-1-14-3-20c0-8-2-14-6-20c-4-8-10-12-16-12z" fill="none" stroke="#f01818" stroke-width="1.200"/>
<path d="M937 221c-10-1-19 6-21.500 15.500c-3 10-4 24-4.500 36.500c-3 3-6 6-5.500 9c1 6 6 10 12 14c5 4 10 7 14 7c6 0 10-4 14-7c6-3 10-5 11-10c2-10 3-22 2.500-36c0-8-3-14-8-20c-4-5-9-9-14-9z" fill="none" stroke="#f01818" stroke-width="1.200"/>
<path d="M1120 207.700c-9-1-17 7-20 17c-3 10-4 20-4 31c-2 5-7 9-6.500 14c1 6 6 10 11 13c6 4 11 8 16.500 8c8 0 15-8 20-15c5-10 7-22 7-34c0-8-2-16-7-22c-4-6-10-12-17-12.700z" fill="none" stroke="#f01818" stroke-width="1.200"/>
<text transform="translate(404.0 55.0) rotate(-90) scale(0.66 1)" font-size="9.5" fill="#fff" stroke="#fff" stroke-width="0.4" font-style="italic">6C25 2/4</text>
<text transform="translate(411.0 52.0) rotate(-90) scale(0.66 1)" font-size="9.5" fill="#fff" stroke="#fff" stroke-width="0.4" font-style="italic">N4C10</text>
<text transform="translate(418.0 55.0) rotate(-90) scale(0.66 1)" font-size="9.5" fill="#fff" stroke="#fff" stroke-width="0.4" font-style="italic">(-0.050)</text>
<text transform="translate(378.0 76.0) scale(0.8 1)" font-size="12" fill="#e020e0" stroke="#e020e0" stroke-width="0.4">1</text>
<text transform="translate(427.0 37.0) scale(0.66 1)" font-size="9.5" fill="#fff" stroke="#fff" stroke-width="0.4" font-style="italic">L2</text>
<path d="M426.0 27.0L426.0 39.0" stroke="#fff" stroke-width="1"/>
<text transform="translate(430.0 46.0) scale(0.66 1)" font-size="9.5" fill="#fff" stroke="#fff" stroke-width="0.4" font-style="italic">3700</text>
<text transform="translate(503.0 46.0) scale(0.66 1)" font-size="9.5" fill="#fff" stroke="#fff" stroke-width="0.4" font-style="italic">1900</text>
<text transform="translate(397.0 87.0) scale(0.66 1)" font-size="9.5" fill="#fff" stroke="#fff" stroke-width="0.4" font-style="italic">4C20</text>
<text transform="translate(451.0 78.0) scale(0.66 1)" font-size="9.5" fill="#fff" stroke="#fff" stroke-width="0.4" font-style="italic">L2</text>
<path d="M450.0 70.0L450.0 89.0" stroke="#fff" stroke-width="1"/>
<text transform="translate(356.0 120.0) rotate(-90) scale(0.66 1)" font-size="9.5" fill="#fff" stroke="#fff" stroke-width="0.4" font-style="italic">KL7(5A) 250x700</text>
<text transform="translate(363.0 120.0) rotate(-90) scale(0.66 1)" font-size="9.5" fill="#fff" stroke="#fff" stroke-width="0.4" font-style="italic">C8@100/200(2)</text>
<text transform="translate(360.0 118.0) rotate(-90) scale(0.66 1)" font-size="7" fill="#fff" stroke="#fff" stroke-width="0.4" font-style="italic">2C25</text>
<text transform="translate(366.0 118.0) rotate(-90) scale(0.66 1)" font-size="7" fill="#fff" stroke="#fff" stroke-width="0.4" font-style="italic">G4C10</text>
<text transform="translate(358.0 112.0) scale(0.66 1)" font-size="9.5" fill="#fff" stroke="#fff" stroke-width="0.4" font-style="italic">2C25 G4C10</text>
<text transform="translate(358.0 120.0) scale(0.66 1)" font-size="6" fill="#fff" stroke="#fff" stroke-width="0.4" font-style="italic">C8@100/200(2)</text>
<text transform="translate(358.0 129.0) scale(0.66 1)" font-size="7" fill="#fff" stroke="#fff" stroke-width="0.4" font-style="italic">2C12</text>
<path d="M350.0 118.0L410.0 118.0" stroke="#bbb" stroke-width="0.6"/>
<path d="M357.0 118.0L357.0 138.0" stroke="#fff" stroke-width="1"/>
<text transform="translate(347.0 139.0) scale(0.66 1)" font-size="9.5" fill="#fff" stroke="#fff" stroke-width="0.4" font-style="italic">7C22 4/3</text>
<text transform="translate(402.0 139.0) scale(0.66 1)" font-size="9.5" fill="#fff" stroke="#fff" stroke-width="0.4" font-style="italic">7C22 4/3</text>
<text transform="translate(545.0 139.0) scale(0.66 1)" font-size="9.5" fill="#fff" stroke="#fff" stroke-width="0.4" font-style="italic">7C22 4/3</text>
<text transform="translate(331.0 153.0) rotate(-90) scale(0.66 1)" font-size="9.5" fill="#fff" stroke="#fff" stroke-width="0.4" font-style="italic">3C18</text>
<text transform="translate(351.0 160.0) scale(0.66 1)" font-size="9.5" fill="#fff" stroke="#fff" stroke-width="0.4" font-style="italic">2C20</text>
<text transform="translate(340.0 168.0) scale(0.66 1)" font-size="9.5" fill="#fff" stroke="#fff" stroke-width="0.4" font-style="italic">C8@100(2)</text>
<text transform="translate(476.0 159.0) scale(0.66 1)" font-size="9.5" fill="#fff" stroke="#fff" stroke-width="0.4" font-style="italic">8C20 4/4</text>
<text transform="translate(476.0 167.0) scale(0.66 1)" font-size="9.5" fill="#fff" stroke="#fff" stroke-width="0.4" font-style="italic">C8@100(2)</text>
<text transform="translate(329.0 88.0) rotate(-90) scale(0.66 1)" font-size="9.5" fill="#fff" stroke="#fff" stroke-width="0.4" font-style="italic">2C12:6</text>
<text transform="translate(530.0 88.0) rotate(-90) scale(0.66 1)" font-size="9.5" fill="#fff" stroke="#fff" stroke-width="0.4" font-style="italic">2C12:6</text>
<text transform="translate(585.0 66.0) rotate(-90) scale(0.66 1)" font-size="9.5" fill="#fff" stroke="#fff" stroke-width="0.4" font-style="italic">2C12:6</text>
<text transform="translate(718.0 60.0) rotate(-90) scale(0.66 1)" font-size="9.5" fill="#fff" stroke="#fff" stroke-width="0.4" font-style="italic">2C12:6</text>
<text transform="translate(718.0 112.0) rotate(-90) scale(0.66 1)" font-size="9.5" fill="#fff" stroke="#fff" stroke-width="0.4" font-style="italic">2C12:6</text>
<text transform="translate(308.0 222.0) rotate(-90) scale(0.66 1)" font-size="9.5" fill="#fff" stroke="#fff" stroke-width="0.4" font-style="italic">L8(5)200x</text>
<text transform="translate(314.5 222.0) rotate(-90) scale(0.66 1)" font-size="9.5" fill="#fff" stroke="#fff" stroke-width="0.4" font-style="italic">3C18;3C18</text>
<text transform="translate(322.5 222.0) rotate(-90) scale(0.66 1)" font-size="9.5" fill="#fff" stroke="#fff" stroke-width="0.4" font-style="italic">G4C10</text>
<path d="M305.0 223.0L333.0 223.0" stroke="#fff" stroke-width="1"/>
<text transform="translate(329.0 236.0) rotate(-90) scale(0.66 1)" font-size="9.5" fill="#fff" stroke="#fff" stroke-width="0.4" font-style="italic">2C12:6</text>
<text transform="translate(329.0 282.0) rotate(-90) scale(0.66 1)" font-size="9.5" fill="#fff" stroke="#fff" stroke-width="0.4" font-style="italic">2C12:6</text>
<text transform="translate(329.0 190.0) rotate(-90) scale(0.66 1)" font-size="9.5" fill="#fff" stroke="#fff" stroke-width="0.4" font-style="italic">2C12:6</text>
<text transform="translate(385.5 279.0) rotate(-90) scale(0.66 1)" font-size="9.5" fill="#fff" stroke="#fff" stroke-width="0.4" font-style="italic">2C12:6</text>
<text transform="translate(385.5 190.0) rotate(-90) scale(0.66 1)" font-size="9.5" fill="#fff" stroke="#fff" stroke-width="0.4" font-style="italic">2C12:6</text>
<text transform="translate(349.0 210.0) scale(0.66 1)" font-size="9.5" fill="#fff" stroke="#fff" stroke-width="0.4" font-style="italic">L1a</text>
<path d="M346.0 191.0L346.0 211.0" stroke="#fff" stroke-width="1"/>
<text transform="translate(361.0 268.0) scale(0.66 1)" font-size="9.5" fill="#fff" stroke="#fff" stroke-width="0.4" font-style="italic">L1a</text>
<path d="M359.0 250.0L359.0 270.0" stroke="#e020e0" stroke-width="1"/>
<text transform="translate(404.0 245.0) rotate(-90) scale(0.66 1)" font-size="9.5" fill="#fff" stroke="#fff" stroke-width="0.4" font-style="italic">6C22 2/4</text>
<text transform="translate(411.0 243.0) rotate(-90) scale(0.66 1)" font-size="9.5" fill="#fff" stroke="#fff" stroke-width="0.4" font-style="italic">N4C10</text>
<text transform="translate(438.0 256.0) scale(0.66 1)" font-size="9.5" fill="#fff" stroke="#fff" stroke-width="0.4" font-style="italic">L2</text>
<path d="M436.0 238.0L436.0 258.0" stroke="#fff" stroke-width="1"/>
<text transform="translate(424.0 180.0) scale(0.66 1)" font-size="9.5" fill="#fff" stroke="#fff" stroke-width="0.4" font-style="italic">KL5(4A) 250x700</text>
<text transform="translate(424.0 188.0) scale(0.66 1)" font-size="9.5" fill="#fff" stroke="#fff" stroke-width="0.4" font-style="italic">C8@100/200(2)</text>
<text transform="translate(424.0 195.5) scale(0.66 1)" font-size="9.5" fill="#fff" stroke="#fff" stroke-width="0.4" font-style="italic">2C22</text>
<text transform="translate(424.0 203.0) scale(0.66 1)" font-size="9.5" fill="#fff" stroke="#fff" stroke-width="0.4" font-style="italic">G4C12</text>
<path d="M422.5 150.0L422.5 203.0" stroke="#fff" stroke-width="1"/>
<text transform="translate(434.0 287.0) scale(0.66 1)" font-size="9.5" fill="#fff" stroke="#fff" stroke-width="0.4" font-style="italic">KL5a(1A) 250x700</text>
<text transform="translate(434.0 295.0) scale(0.66 1)" font-size="9.5" fill="#fff" stroke="#fff" stroke-width="0.4" font-style="italic">C8@100/200(2)</text>
<text transform="translate(434.0 303.0) scale(0.66 1)" font-size="9.5" fill="#fff" stroke="#fff" stroke-width="0.4" font-style="italic">2C22</text>
<text transform="translate(434.0 311.0) scale(0.66 1)" font-size="9.5" fill="#fff" stroke="#fff" stroke-width="0.4" font-style="italic">G4C12</text>
<path d="M432.0 280.0L432.0 328.0" stroke="#fff" stroke-width="1"/>
<text transform="translate(498.5 273.0) rotate(-90) scale(0.66 1)" font-size="9.5" fill="#fff" stroke="#fff" stroke-width="0.4" font-style="italic">L14(5) 200x400</text>
<text transform="translate(505.5 272.0) rotate(-90) scale(0.66 1)" font-size="9.5" fill="#fff" stroke="#fff" stroke-width="0.4" font-style="italic">C8@100(2)</text>
<text transform="translate(512.5 270.0) rotate(-90) scale(0.66 1)" font-size="9.5" fill="#fff" stroke="#fff" stroke-width="0.4" font-style="italic">2C22</text>
<path d="M490.0 273.0L534.0 273.0" stroke="#fff" stroke-width="1"/>
<text transform="translate(351.0 325.0) scale(0.66 1)" font-size="9.5" fill="#fff" stroke="#fff" stroke-width="0.4" font-style="italic">7C22 4/3</text>
<text transform="translate(402.0 325.0) scale(0.66 1)" font-size="9.5" fill="#fff" stroke="#fff" stroke-width="0.4" font-style="italic">7C22 4/3</text>
<text transform="translate(536.0 321.0) scale(0.66 1)" font-size="9.5" fill="#fff" stroke="#fff" stroke-width="0.4" font-style="italic">2C12:6</text>
<path d="M532.0 323.5L567.0 323.5" stroke="#fff" stroke-width="1"/>
<text transform="translate(530.0 238.0) rotate(-90) scale(0.66 1)" font-size="9.5" fill="#fff" stroke="#fff" stroke-width="0.4" font-style="italic">2C12:6</text>
<text transform="translate(585.5 229.0) rotate(-90) scale(0.66 1)" font-size="9.5" fill="#fff" stroke="#fff" stroke-width="0.4" font-style="italic">2C12:6</text>
<text transform="translate(585.5 298.0) rotate(-90) scale(0.66 1)" font-size="9.5" fill="#fff" stroke="#fff" stroke-width="0.4" font-style="italic">2C12:6</text>
<text transform="translate(546.0 40.0) rotate(-90) scale(0.66 1)" font-size="9.5" fill="#fff" stroke="#fff" stroke-width="0.4" font-style="italic">4C20</text>
<text transform="translate(552.0 38.0) rotate(-90) scale(0.66 1)" font-size="9.5" fill="#fff" stroke="#fff" stroke-width="0.4" font-style="italic">N2C1</text>
<text transform="translate(548.0 241.0) rotate(-90) scale(0.66 1)" font-size="9.5" fill="#fff" stroke="#fff" stroke-width="0.4" font-style="italic">3C20</text>
<text transform="translate(532.5 194.0) rotate(-90) scale(0.66 1)" font-size="9.5" fill="#fff" stroke="#fff" stroke-width="0.4" font-style="italic">6C22 3/3</text>
<text transform="translate(590.0 149.0) rotate(-90) scale(0.66 1)" font-size="9.5" fill="#fff" stroke="#fff" stroke-width="0.4" font-style="italic">4C25</text>
<text transform="translate(604.0 62.0) rotate(-90) scale(0.66 1)" font-size="9.5" fill="#fff" stroke="#fff" stroke-width="0.4" font-style="italic">4C22</text>
<text transform="translate(612.0 72.0) rotate(-90) scale(0.66 1)" font-size="9.5" fill="#fff" stroke="#fff" stroke-width="0.4" font-style="italic">C8@100(2)</text>
<text transform="translate(620.0 64.0) rotate(-90) scale(0.66 1)" font-size="9.5" fill="#fff" stroke="#fff" stroke-width="0.4" font-style="italic">N4C18</text>
<text transform="translate(618.0 90.0) scale(0.66 1)" font-size="9.5" fill="#fff" stroke="#fff" stroke-width="0.4" font-style="italic">L10(1) 200x500</text>
<text transform="translate(618.0 98.0) scale(0.66 1)" font-size="9.5" fill="#fff" stroke="#fff" stroke-width="0.4" font-style="italic">C8@200(2)</text>
<text transform="translate(618.0 106.0) scale(0.66 1)" font-size="9.5" fill="#fff" stroke="#fff" stroke-width="0.4" font-style="italic">2C14;4C18</text>
<path d="M616.0 68.0L616.0 106.0" stroke="#fff" stroke-width="1"/>
<text transform="translate(656.0 31.0) scale(0.66 1)" font-size="9.5" fill="#fff" stroke="#fff" stroke-width="0.4" font-style="italic">3C16</text>
<text transform="translate(684.0 54.0) rotate(-90) scale(0.66 1)" font-size="9.5" fill="#fff" stroke="#fff" stroke-width="0.4" font-style="italic">L14(1) 200</text>
<text transform="translate(690.0 54.0) rotate(-90) scale(0.66 1)" font-size="9.5" fill="#fff" stroke="#fff" stroke-width="0.4" font-style="italic">C8@200(2</text>
<text transform="translate(696.0 54.0) rotate(-90) scale(0.66 1)" font-size="9.5" fill="#fff" stroke="#fff" stroke-width="0.4" font-style="italic">2C16;4C18</text>
<path d="M679.0 56.0L755.0 56.0" stroke="#fff" stroke-width="1"/>
<text transform="translate(726.0 58.0) scale(0.66 1)" font-size="9.5" fill="#fff" stroke="#fff" stroke-width="0.4" font-style="italic">2C12:6</text>
<text transform="translate(738.0 48.0) rotate(-90) scale(0.66 1)" font-size="9.5" fill="#fff" stroke="#fff" stroke-width="0.4" font-style="italic">1750</text>
<text transform="translate(738.0 97.0) rotate(-90) scale(0.66 1)" font-size="9.5" fill="#fff" stroke="#fff" stroke-width="0.4" font-style="italic">1800</text>
<text transform="translate(738.0 143.0) rotate(-90) scale(0.66 1)" font-size="9.5" fill="#fff" stroke="#fff" stroke-width="0.4" font-style="italic">1650</text>
<text transform="translate(716.0 144.0) rotate(-90) scale(0.66 1)" font-size="9.5" fill="#fff" stroke="#fff" stroke-width="0.4" font-style="italic">06</text>
<text transform="translate(763.0 109.0) scale(0.66 1)" font-size="9.5" fill="#fff" stroke="#fff" stroke-width="0.4" font-style="italic">3C</text>
<text transform="translate(746.0 135.0) scale(0.66 1)" font-size="9.5" fill="#fff" stroke="#fff" stroke-width="0.4" font-style="italic">L5(1) 200</text>
<text transform="translate(746.0 143.0) scale(0.66 1)" font-size="9.5" fill="#fff" stroke="#fff" stroke-width="0.4" font-style="italic">C8@200(</text>
<path d="M744.0 114.0L744.0 141.0" stroke="#fff" stroke-width="1"/>
<text transform="translate(650.0 174.0) scale(0.66 1)" font-size="9.5" fill="#fff" stroke="#fff" stroke-width="0.4" font-style="italic">5100</text>
<text transform="translate(683.0 166.0) scale(0.66 1)" font-size="9.5" fill="#fff" stroke="#fff" stroke-width="0.4" font-style="italic">3C20</text>
<text transform="translate(683.0 175.0) scale(0.66 1)" font-size="9.5" fill="#fff" stroke="#fff" stroke-width="0.4" font-style="italic">N4C12</text>
<text transform="translate(746.0 174.0) scale(0.66 1)" font-size="9.5" fill="#fff" stroke="#fff" stroke-width="0.4" font-style="italic">2400</text>
<text transform="translate(564.5 256.0) rotate(-90) scale(0.66 1)" font-size="9.5" fill="#fff" stroke="#fff" stroke-width="0.4" font-style="italic">KL8(5A) 250x700</text>
<text transform="translate(575.5 256.0) rotate(-90) scale(0.66 1)" font-size="9.5" fill="#fff" stroke="#fff" stroke-width="0.4" font-style="italic">2C25</text>
<text transform="translate(582.5 256.0) rotate(-90) scale(0.66 1)" font-size="9.5" fill="#fff" stroke="#fff" stroke-width="0.4" font-style="italic">G4C10</text>
<path d="M560.0 259.0L595.0 259.0" stroke="#fff" stroke-width="1"/>
<text transform="translate(604.0 227.0) rotate(-90) scale(0.66 1)" font-size="9.5" fill="#fff" stroke="#fff" stroke-width="0.4" font-style="italic">5C22 2/3</text>
<text transform="translate(612.5 240.0) rotate(-90) scale(0.66 1)" font-size="9.5" fill="#fff" stroke="#fff" stroke-width="0.4" font-style="italic">C10@100/200(2)</text>
<text transform="translate(621.5 226.0) rotate(-90) scale(0.66 1)" font-size="9.5" fill="#fff" stroke="#fff" stroke-width="0.4" font-style="italic">N4C14</text>
<text transform="translate(675.0 308.0) scale(0.66 1)" font-size="9.5" fill="#fff" stroke="#fff" stroke-width="0.4" font-style="italic">3C16</text>
<text transform="translate(656.0 320.0) scale(0.66 1)" font-size="9.5" fill="#fff" stroke="#fff" stroke-width="0.4" font-style="italic">L5(3) 200x500</text>
<text transform="translate(656.0 328.0) scale(0.66 1)" font-size="9.5" fill="#fff" stroke="#fff" stroke-width="0.4" font-style="italic">C8@200(2)</text>
<text transform="translate(656.0 336.0) scale(0.66 1)" font-size="9.5" fill="#fff" stroke="#fff" stroke-width="0.4" font-style="italic">3C16</text>
<path d="M653.0 300.0L653.0 334.0" stroke="#fff" stroke-width="1"/>
<text transform="translate(748.0 257.0) rotate(-90) scale(0.66 1)" font-size="9.5" fill="#fff" stroke="#fff" stroke-width="0.4" font-style="italic">KL9(5A) 250x700</text>
<text transform="translate(755.0 255.0) rotate(-90) scale(0.66 1)" font-size="9.5" fill="#fff" stroke="#fff" stroke-width="0.4" font-style="italic">C8@100/200(2)</text>
<text transform="translate(763.0 253.0) rotate(-90) scale(0.66 1)" font-size="9.5" fill="#fff" stroke="#fff" stroke-width="0.4" font-style="italic">2C25</text>
<text transform="translate(771.0 253.0) rotate(-90) scale(0.66 1)" font-size="9.5" fill="#fff" stroke="#fff" stroke-width="0.4" font-style="italic">G4C10</text>
<path d="M742.0 259.0L792.0 259.0" stroke="#fff" stroke-width="1"/>
<text transform="translate(840.0 31.0) scale(0.66 1)" font-size="9.5" fill="#fff" stroke="#fff" stroke-width="0.4" font-style="italic">3C16</text>
<text transform="translate(908.0 42.0) scale(0.66 1)" font-size="9.5" fill="#fff" stroke="#fff" stroke-width="0.4" font-style="italic">L9(3) 200x500</text>
<text transform="translate(908.0 50.0) scale(0.66 1)" font-size="9.5" fill="#fff" stroke="#fff" stroke-width="0.4" font-style="italic">C8@200(2)</text>
<text transform="translate(908.0 58.0) scale(0.66 1)" font-size="9.5" fill="#fff" stroke="#fff" stroke-width="0.4" font-style="italic">2C18</text>
<path d="M905.0 26.0L905.0 56.0" stroke="#fff" stroke-width="1"/>
<text transform="translate(797.0 64.0) rotate(-90) scale(0.66 1)" font-size="9.5" fill="#fff" stroke="#fff" stroke-width="0.4" font-style="italic">C10@100(2)</text>
<text transform="translate(804.0 64.0) rotate(-90) scale(0.66 1)" font-size="9.5" fill="#fff" stroke="#fff" stroke-width="0.4" font-style="italic">8C22 3/5</text>
<text transform="translate(812.0 58.0) rotate(-90) scale(0.66 1)" font-size="9.5" fill="#fff" stroke="#fff" stroke-width="0.4" font-style="italic">N4C14</text>
<text transform="translate(791.0 86.0) scale(0.66 1)" font-size="9.5" fill="#fff" stroke="#fff" stroke-width="0.4" font-style="italic">3C20</text>
<text transform="translate(852.0 101.0) scale(0.66 1)" font-size="9.5" fill="#fff" stroke="#fff" stroke-width="0.4" font-style="italic">3C16</text>
<text transform="translate(807.0 114.0) scale(0.66 1)" font-size="9.5" fill="#fff" stroke="#fff" stroke-width="0.4" font-style="italic">L6(2) 200x500</text>
<text transform="translate(807.0 122.0) scale(0.66 1)" font-size="9.5" fill="#fff" stroke="#fff" stroke-width="0.4" font-style="italic">C8@200(2)</text>
<text transform="translate(807.0 130.0) scale(0.66 1)" font-size="9.5" fill="#fff" stroke="#fff" stroke-width="0.4" font-style="italic">2C20</text>
<path d="M804.0 93.0L804.0 130.0" stroke="#fff" stroke-width="1"/>
<text transform="translate(791.0 150.0) scale(0.66 1)" font-size="9.5" fill="#fff" stroke="#fff" stroke-width="0.4" font-style="italic">4C22</text>
<text transform="translate(866.0 166.0) scale(0.66 1)" font-size="9.5" fill="#fff" stroke="#fff" stroke-width="0.4" font-style="italic">3C20</text>
<text transform="translate(974.0 54.0) rotate(-90) scale(0.66 1)" font-size="9.5" fill="#fff" stroke="#fff" stroke-width="0.4" font-style="italic">6C22 2/4</text>
<text transform="translate(982.0 46.0) rotate(-90) scale(0.66 1)" font-size="9.5" fill="#fff" stroke="#fff" stroke-width="0.4" font-style="italic">N4C10</text>
<text transform="translate(968.0 86.0) scale(0.66 1)" font-size="9.5" fill="#fff" stroke="#fff" stroke-width="0.4" font-style="italic">5C20 3/2</text>
<text transform="translate(974.0 152.0) scale(0.66 1)" font-size="9.5" fill="#fff" stroke="#fff" stroke-width="0.4" font-style="italic">4C22</text>
<text transform="translate(959.0 192.0) rotate(-90) scale(0.66 1)" font-size="9.5" fill="#fff" stroke="#fff" stroke-width="0.4" font-style="italic">7C22 4/3</text>
<text transform="translate(956.0 88.0) rotate(-90) scale(0.66 1)" font-size="9.5" fill="#fff" stroke="#fff" stroke-width="0.4" font-style="italic">2C12:6</text>
<text transform="translate(776.0 66.0) rotate(-90) scale(0.66 1)" font-size="9.5" fill="#fff" stroke="#fff" stroke-width="0.4" font-style="italic">2C12:6</text>
<text transform="translate(776.0 110.0) rotate(-90) scale(0.66 1)" font-size="9.5" fill="#fff" stroke="#fff" stroke-width="0.4" font-style="italic">2C12:6</text>
<text transform="translate(797.0 227.0) rotate(-90) scale(0.66 1)" font-size="9.5" fill="#fff" stroke="#fff" stroke-width="0.4" font-style="italic">5C22 2/3</text>
<text transform="translate(880.0 209.0) scale(0.66 1)" font-size="9.5" fill="#fff" stroke="#fff" stroke-width="0.4" font-style="italic">L5</text>
<path d="M878.0 202.0L878.0 228.0" stroke="#fff" stroke-width="1"/>
<text transform="translate(791.0 294.0) scale(0.66 1)" font-size="9.5" fill="#fff" stroke="#fff" stroke-width="0.4" font-style="italic">4C16</text>
<text transform="translate(862.0 310.0) scale(0.66 1)" font-size="9.5" fill="#fff" stroke="#fff" stroke-width="0.4" font-style="italic">4C16</text>
<text transform="translate(968.0 294.0) scale(0.66 1)" font-size="9.5" fill="#fff" stroke="#fff" stroke-width="0.4" font-style="italic">4C16</text>
<text transform="translate(975.0 276.0) rotate(-90) scale(0.66 1)" font-size="9.5" fill="#fff" stroke="#fff" stroke-width="0.4" font-style="italic">5C22 2/3</text>
<text transform="translate(985.0 270.0) rotate(-90) scale(0.66 1)" font-size="9.5" fill="#fff" stroke="#fff" stroke-width="0.4" font-style="italic">N4C10</text>
<text transform="translate(930.0 288.0) rotate(-90) scale(0.66 1)" font-size="9.5" fill="#fff" stroke="#fff" stroke-width="0.4" font-style="italic">KL10(3A) 250x700</text>
<text transform="translate(938.0 288.0) rotate(-90) scale(0.66 1)" font-size="9.5" fill="#fff" stroke="#fff" stroke-width="0.4" font-style="italic">C8@100/200(2)</text>
<text transform="translate(946.0 284.0) rotate(-90) scale(0.66 1)" font-size="8" fill="#ff2020" stroke="#ff2020" stroke-width="0.4" font-style="italic">2C22</text>
<text transform="translate(954.0 284.0) rotate(-90) scale(0.66 1)" font-size="9.5" fill="#fff" stroke="#fff" stroke-width="0.4" font-style="italic">G4C10</text>
<path d="M924.0 291.0L958.0 291.0" stroke="#fff" stroke-width="1"/>
<text transform="translate(1060.0 31.0) scale(0.66 1)" font-size="9.5" fill="#fff" stroke="#fff" stroke-width="0.4" font-style="italic">4C16</text>
<text transform="translate(1036.0 66.0) rotate(-90) scale(0.66 1)" font-size="9.5" fill="#fff" stroke="#fff" stroke-width="0.4" font-style="italic">2700</text>
<text transform="translate(1036.0 132.0) rotate(-90) scale(0.66 1)" font-size="9.5" fill="#fff" stroke="#fff" stroke-width="0.4" font-style="italic">2500</text>
<text transform="translate(1036.0 208.0) rotate(-90) scale(0.66 1)" font-size="9.5" fill="#fff" stroke="#fff" stroke-width="0.4" font-style="italic">2900</text>
<text transform="translate(1036.0 274.0) rotate(-90) scale(0.66 1)" font-size="9.5" fill="#fff" stroke="#fff" stroke-width="0.4" font-style="italic">2700</text>
<text transform="translate(1036.0 334.0) rotate(-90) scale(0.66 1)" font-size="9.5" fill="#fff" stroke="#fff" stroke-width="0.4" font-style="italic">30</text>
<text transform="translate(1051.0 101.0) scale(0.66 1)" font-size="9.5" fill="#fff" stroke="#fff" stroke-width="0.4" font-style="italic">5C16 2/3</text>
<text transform="translate(1054.0 169.0) scale(0.66 1)" font-size="9.5" fill="#fff" stroke="#fff" stroke-width="0.4" font-style="italic">3C20</text>
<text transform="translate(1130.0 152.0) scale(0.66 1)" font-size="9.5" fill="#fff" stroke="#fff" stroke-width="0.4" font-style="italic">3C22</text>
<text transform="translate(1172.0 150.0) scale(0.66 1)" font-size="9.5" fill="#fff" stroke="#fff" stroke-width="0.4" font-style="italic">3C22</text>
<text transform="translate(1172.0 87.0) scale(0.66 1)" font-size="9.5" fill="#fff" stroke="#fff" stroke-width="0.4" font-style="italic">3C20</text>
<text transform="translate(1177.0 72.0) rotate(-90) scale(0.66 1)" font-size="9.5" fill="#fff" stroke="#fff" stroke-width="0.4" font-style="italic">N4C10</text>
<text transform="translate(1148.0 90.0) rotate(-90) scale(0.66 1)" font-size="9.5" fill="#fff" stroke="#fff" stroke-width="0.4" font-style="italic">2C12:6</text>
<text transform="translate(1148.0 226.0) rotate(-90) scale(0.66 1)" font-size="9.5" fill="#fff" stroke="#fff" stroke-width="0.4" font-style="italic">2C12:6</text>
<text transform="translate(1148.0 300.0) rotate(-90) scale(0.66 1)" font-size="9.5" fill="#fff" stroke="#fff" stroke-width="0.4" font-style="italic">2C12:6</text>
<text transform="translate(1046.0 311.0) scale(0.66 1)" font-size="9.5" fill="#fff" stroke="#fff" stroke-width="0.4" font-style="italic">4C16</text>
<text transform="translate(1194.0 271.0) scale(0.66 1)" font-size="9.5" fill="#fff" stroke="#fff" stroke-width="0.4" font-style="italic">3050</text>
<text transform="translate(1183.0 200.0) rotate(-90) scale(0.66 1)" font-size="9.5" fill="#fff" stroke="#fff" stroke-width="0.4" font-style="italic">KL11</text>
<path d="M1166.0 199.0L1180.0 199.0" stroke="#fff" stroke-width="1"/>
<text transform="translate(1120.0 286.0) rotate(-90) scale(0.66 1)" font-size="9.5" fill="#fff" stroke="#fff" stroke-width="0.4" font-style="italic">KL11(3A) 250x700</text>
<text transform="translate(1128.0 284.0) rotate(-90) scale(0.66 1)" font-size="8" fill="#ff2020" stroke="#ff2020" stroke-width="0.4" font-style="italic">C8@100/200(2)</text>
<text transform="translate(1136.0 284.0) rotate(-90) scale(0.66 1)" font-size="9.5" fill="#fff" stroke="#fff" stroke-width="0.4" font-style="italic">2C20;4C20</text>
<text transform="translate(1144.0 282.0) rotate(-90) scale(0.66 1)" font-size="9.5" fill="#fff" stroke="#fff" stroke-width="0.4" font-style="italic">G4C10</text>
<path d="M1114.0 288.0L1150.0 288.0" stroke="#fff" stroke-width="1"/>
<text transform="translate(1151.0 205.0) rotate(-90) scale(0.66 1)" font-size="9.5" fill="#fff" stroke="#fff" stroke-width="0.4" font-style="italic">5C20 3/2</text>
<rect x="1219.500" y="25.500" width="33" height="227" fill="#8a8e96" stroke="#a4a8ae"/>
<circle cx="1234.500" cy="48" r="9.500" fill="#c4c8ce" stroke="#e2e5ea" stroke-width="1"/><ellipse cx="1235" cy="52" rx="12.500" ry="4" fill="none" stroke="#5f656e" stroke-width="1" transform="rotate(-22 1235 52)"/><circle cx="1243" cy="42.500" r="4.200" fill="#e6e9ee" stroke="#5f656e" stroke-width="1"/>
<path d="M1223.5 72.5l7-6h17v17l-7 6z" fill="#6d7480"/>
<path d="M1223.5 72.5l7-6h17l-7 6z" fill="#8c929c"/>
<rect x="1223.5" y="72.5" width="17" height="17" fill="#79808c"/>
<path d="M1223.5 72.5l7-6h17v17l-7 6h-17zM1223.5 72.5h17l7-6M1240.5 72.5v17" fill="none" stroke="#3d434d" stroke-width="1.100"/>
<text x="1227.5" y="85.5" font-size="8" fill="#23282f">3D</text>
<path d="M1223.5 101.5l7-6h17v17l-7 6z" fill="#b8c8e2"/>
<path d="M1223.5 101.5l7-6h17l-7 6z" fill="#c9d8f0"/>
<rect x="1223.5" y="101.5" width="17" height="17" fill="#d8e6fb"/>
<path d="M1223.5 101.5l7-6h17v17l-7 6h-17zM1223.5 101.5h17l7-6M1240.5 101.5v17" fill="none" stroke="#3d434d" stroke-width="1.100"/>
<path d="M1230.5 95.5v17h17M1230.5 112.5l-7 6" fill="none" stroke="#3d434d" stroke-width="0.800"/>
<path d="M1223.5 140.5l7-6h17v17l-7 6z" fill="#6d7480"/>
<path d="M1223.5 140.5l7-6h17l-7 6z" fill="#8c929c"/>
<rect x="1223.5" y="140.5" width="17" height="17" fill="#79808c"/>
<path d="M1223.5 140.5l7-6h17v17l-7 6h-17zM1223.5 140.5h17l7-6M1240.5 140.5v17" fill="none" stroke="#3d434d" stroke-width="1.100"/>
<path d="M1232.500 124.5h6l-3 3z" fill="#30353d"/>
<path d="M1232.500 163.5h6l-3 3z" fill="#30353d"/>
<path d="M1232.500 203.0h6l-3 3z" fill="#30353d"/>
<path d="M1245 189a9.500 9.500 0 1 1-3.500-10.500" fill="none" stroke="#3d434d" stroke-width="1.800"/><path d="M1238 174l7.500 1-2.500 7z" fill="#3d434d"/>
<path d="M1224.0 213.5L1248.0 213.5" stroke="#b4b8be" stroke-width="1"/>
<rect x="1225" y="217.500" width="22" height="21" fill="#969ca4" stroke="#3d434d"/><path d="M1225 221.500h22M1236 221.500v17" stroke="#3d434d"/>
<path d="M1227.500 225.5h2.500M1231.500 225.5h3M1238.500 225.5h2.500M1242.500 225.5h3" stroke="#3d434d" stroke-width="1.500"/>
<path d="M1227.500 229.5h2.500M1231.500 229.5h3M1238.500 229.5h2.500M1242.500 229.5h3" stroke="#3d434d" stroke-width="1.500"/>
<path d="M1227.500 233.5h2.500M1231.500 233.5h3M1238.500 233.5h2.500M1242.500 233.5h3" stroke="#3d434d" stroke-width="1.500"/>
</svg>
<div class="a" style="left:298px;top:337px;width:957px;height:4px;background:#fafafa"></div>
<div class="a" style="left:298px;top:341px;width:957px;height:12px;background:#d5d6db"></div>
<div class="x" style="left:1241px;top:342px">×</div>
<div class="a" style="left:727px;top:337px;width:100px;height:4px;background:#687180"></div>
<div class="a" style="left:774px;top:338px;width:0;height:0;border-left:3px solid transparent;border-right:3px solid transparent;border-top:3px solid #c8ccd4"></div>
<div class="a" style="left:298px;top:353px;width:957px;height:22px;background:#f0f0f0;border-bottom:1px solid #d0d0d0"></div>
<div class="a" style="left:307px;top:355px;line-height:21px;font-weight:bold;color:#666">梁平法表格</div>
<div class="a" style="left:298px;top:375px;width:957px;height:31px;background:#f0f0f0;border-bottom:1px solid #d0d0d0"></div>
<div class="tb" style="left:303px">复制跨数据</div>
<div class="tb" style="left:377px;color:#aaa">粘贴跨数据</div>
<div class="tb" style="left:451px">输入当前列数据</div>
<div class="tb" style="left:549px">删除当前列数据</div>
<div class="tb" style="left:647px">页面设置</div>
<div class="tb" style="left:709px">调换起始跨</div>
<div class="tb" style="left:783px">悬臂钢筋代号</div>
<div class="a" style="left:298px;top:405px;width:957px;height:147px;background:#fff;border-left:1px solid #d0d0d0"></div>
<div class="a" style="left:299px;top:405px;width:7px;height:34px;background:#fff"></div>
<div class="hc" style="left:306px;top:406px;width:61px;height:34px;line-height:38px;">位置</div>
<div class="hc" style="left:367px;top:406px;width:61px;height:34px;line-height:38px;">名称</div>
<div class="hc" style="left:428px;top:406px;width:61px;height:34px;line-height:38px;">跨号</div>
<div class="hc" style="left:489px;top:406px;width:122px;height:17px;line-height:19px;">标高</div>
<div class="hc" style="left:489px;top:423px;width:61px;height:17px;line-height:19px;">起点标高</div>
<div class="hc" style="left:550px;top:423px;width:61px;height:17px;line-height:19px;">终点标高</div>
<div class="hc" style="left:611px;top:406px;width:427px;height:17px;line-height:19px;background:#7ab6f5;color:#fff;font-weight:bold;border-color:#7ab6f5;">构件尺寸(mm)</div>
<div class="hc" style="left:611px;top:423px;width:41px;height:17px;line-height:19px;">A1</div>
<div class="hc" style="left:652px;top:423px;width:41px;height:17px;line-height:19px;">A2</div>
<div class="hc" style="left:693px;top:423px;width:41px;height:17px;line-height:19px;">A3</div>
<div class="hc" style="left:734px;top:423px;width:41px;height:17px;line-height:19px;">A4</div>
<div class="hc" style="left:775px;top:423px;width:100px;height:17px;line-height:19px;">跨长</div>
<div class="hc" style="left:875px;top:423px;width:82px;height:17px;line-height:19px;">截面(B*H)</div>
<div class="hc" style="left:957px;top:423px;width:81px;height:17px;line-height:19px;background:#7ab6f5;color:#fff;">距左边线距离</div>
<div class="hc" style="left:1038px;top:406px;width:81px;height:34px;line-height:38px;">上通长筋</div>
<div class="hc" style="left:1119px;top:406px;width:121px;height:17px;line-height:19px;text-align:left;padding-left:95px;">上部钢筋</div>
<div class="hc" style="left:1119px;top:423px;width:81px;height:17px;line-height:19px;padding-left:3px;">左支座钢筋</div>
<div class="hc" style="left:1200px;top:423px;width:40px;height:17px;line-height:19px;text-align:left;padding-left:18px;">跨中钢筋</div>
<div class="c" style="left:306px;top:440px;width:61px;height:84px;line-height:17px;padding:14px 0 0 4px;letter-spacing:0.3px">&lt;1-0,1-0;<br>1-0,1-0&gt;</div>
<div class="c" style="left:367px;top:440px;width:61px;height:84px;line-height:65px">KL5(4A)</div>
<div class="c" style="left:428px;top:440px;width:61px;height:21px">1</div>
<div class="c" style="left:489px;top:440px;width:61px;height:21px">4.45</div>
<div class="c" style="left:550px;top:440px;width:61px;height:21px">4.45</div>
<div class="c" style="left:611px;top:440px;width:41px;height:21px"></div>
<div class="c" style="left:652px;top:440px;width:41px;height:21px">(250)</div>
<div class="c" style="left:693px;top:440px;width:41px;height:21px">(250)</div>
<div class="c" style="left:734px;top:440px;width:41px;height:21px"></div>
<div class="c" style="left:775px;top:440px;width:100px;height:21px">(7800)</div>
<div class="c" style="left:875px;top:440px;width:82px;height:21px">(250*700)</div>
<div class="c" style="left:957px;top:440px;width:81px;height:21px">(125)</div>
<div class="c" style="left:1038px;top:440px;width:81px;height:21px"></div>
<div class="c" style="left:1119px;top:440px;width:81px;height:21px"></div>
<div class="c" style="left:1200px;top:440px;width:40px;height:21px"></div>
<div class="rn" style="top:440px">2</div>
<div class="c" style="left:428px;top:461px;width:61px;height:21px">2</div>
<div class="c" style="left:489px;top:461px;width:61px;height:21px">4.45</div>
<div class="c" style="left:550px;top:461px;width:61px;height:21px">4.45</div>
<div class="c" style="left:611px;top:461px;width:41px;height:21px"></div>
<div class="c" style="left:652px;top:461px;width:41px;height:21px">(250)</div>
<div class="c" style="left:693px;top:461px;width:41px;height:21px">(125)</div>
<div class="c" style="left:734px;top:461px;width:41px;height:21px"></div>
<div class="c" style="left:775px;top:461px;width:100px;height:21px">(7325)</div>
<div class="c" style="left:875px;top:461px;width:82px;height:21px">(250*700)</div>
<div class="c" style="left:957px;top:461px;width:81px;height:21px"></div>
<div class="c" style="left:1038px;top:461px;width:81px;height:21px"></div>
<div class="c" style="left:1119px;top:461px;width:81px;height:21px"></div>
<div class="c" style="left:1200px;top:461px;width:40px;height:21px"></div>
<div class="rn" style="top:461px;background:#6aa9f0;color:#fff;font-weight:bold">3</div>
<div class="c" style="left:428px;top:482px;width:61px;height:21px">3</div>
<div class="c" style="left:489px;top:482px;width:61px;height:21px">4.45</div>
<div class="c" style="left:550px;top:482px;width:61px;height:21px">4.45</div>
<div class="c" style="left:611px;top:482px;width:41px;height:21px"></div>
<div class="c" style="left:652px;top:482px;width:41px;height:21px">(125)</div>
<div class="c" style="left:693px;top:482px;width:41px;height:21px">(125)</div>
<div class="c" style="left:734px;top:482px;width:41px;height:21px"></div>
<div class="c" style="left:775px;top:482px;width:100px;height:21px">(6950)</div>
<div class="c" style="left:875px;top:482px;width:82px;height:21px">(250*700)</div>
<div class="c" style="left:957px;top:482px;width:81px;height:21px">125</div>
<div class="c" style="left:1038px;top:482px;width:81px;height:21px"></div>
<div class="c" style="left:1119px;top:482px;width:81px;height:21px"></div>
<div class="c" style="left:1200px;top:482px;width:40px;height:21px"></div>
<div class="rn" style="top:482px">4</div>
<div class="c" style="left:428px;top:503px;width:61px;height:21px">4</div>
<div class="c" style="left:489px;top:503px;width:61px;height:21px">4.45</div>
<div class="c" style="left:550px;top:503px;width:61px;height:21px">4.45</div>
<div class="c" style="left:611px;top:503px;width:41px;height:21px"></div>
<div class="c" style="left:652px;top:503px;width:41px;height:21px">(125)</div>
<div class="c" style="left:693px;top:503px;width:41px;height:21px">(250)</div>
<div class="c" style="left:734px;top:503px;width:41px;height:21px">(0)</div>
<div class="c" style="left:775px;top:503px;width:100px;height:21px">(7575)</div>
<div class="c" style="left:875px;top:503px;width:82px;height:21px">(250*700)</div>
<div class="c" style="left:957px;top:503px;width:81px;height:21px">(125)</div>
<div class="c" style="left:1038px;top:503px;width:81px;height:21px"></div>
<div class="c" style="left:1119px;top:503px;width:81px;height:21px"></div>
<div class="c" style="left:1200px;top:503px;width:40px;height:21px"></div>
<div class="rn" style="top:503px">5</div>
<div class="a" style="left:956px;top:460px;width:83px;height:22px;border:1px solid #4a90e2;background:#fff"></div>
<div class="a" style="left:959px;top:463px;width:8px;height:16px;background:#2f7de1;color:#fff;line-height:16px;text-align:center">0</div>
<div class="a" style="left:1025px;top:469px;width:0;height:0;border-left:3px solid transparent;border-right:3px solid transparent;border-top:3px solid #444"></div>
<div class="a" style="left:1036px;top:480px;width:4px;height:4px;background:#4a90e2"></div>
<div class="a" style="left:1240px;top:406px;width:15px;height:146px;background:#fff"></div>
<div class="a" style="left:1243px;top:408px;width:0;height:0;border-left:4px solid transparent;border-right:4px solid transparent;border-bottom:4px solid #333"></div>
<div class="a" style="left:1243px;top:438px;width:8px;height:90px;border-radius:4px;background:#c6c6c6"></div>
<div class="a" style="left:1243px;top:531px;width:0;height:0;border-left:4px solid transparent;border-right:4px solid transparent;border-top:4px solid #333"></div>
<div class="a" style="left:1233px;top:541px;width:0;height:0;border-top:4px solid transparent;border-bottom:4px solid transparent;border-left:4px solid #333"></div>
<div class="a" style="left:301px;top:541px;width:0;height:0;border-top:4px solid transparent;border-bottom:4px solid transparent;border-right:4px solid #333"></div>
<div class="a" style="left:308px;top:541px;width:286px;height:8px;border-radius:4px;background:#c6c6c6"></div>
<svg class="a" style="left:1000px;top:395px" width="90" height="80" viewBox="1000 395 90 80"><path d="M1076.300 401 Q1058 414 1046.600 425.400 L1023.300 452.200 L1018 449.400 L1014.400 466.300 L1030.800 460.300 L1028.300 457.200 L1052.300 430.300 Q1066 414 1076.300 401 Z" fill="#f53a3a"/></svg>
<div class="a" style="left:0;top:552px;width:1255px;height:14px;background:#e6e6e6;border-top:1px solid #d0d0d0"></div>
<div class="sb" style="left:0px">36</div>
<div class="sb" style="left:155px">层高：</div>
<div class="sb" style="left:196px">4.5</div>
<div class="sb" style="left:235px">标高：</div>
<div class="sb" style="left:282px">-0.05~4.45</div>
<div class="sb" style="left:370px">1(1)</div>
<div class="sb" style="left:472px">跨董：0</div>
<div class="sb" style="left:895px">按鼠标左键指定第一个角点，或拾取构件图元</div>
<div class="sb" style="left:1174px">76.8031 FPS</div>
<div class="sbtn" style="left:576px;width:25px;background:#fff;border-color:#3b82e0"></div>
<div class="sbtn" style="left:604px;width:36px;background:#fff;border-color:#3b82e0"></div>
<div class="a" style="left:608px;top:560px;width:5px;height:5px;border:1px solid #e07020;background:#ffc080"></div><div class="a" style="left:611px;top:563px;width:12px;height:8px;border:1px solid #3b6fc0"></div>
<div class="a" style="left:585px;top:563px;width:1px;height:6px;background:#3b6fc0"></div>
<div class="sbtn" style="left:646px;width:24px"></div>
<div class="sbtn" style="left:674px;width:35px"></div>
<div class="sbtn" style="left:713px;width:35px"></div>
<svg class="a" style="left:646px;top:556px" width="110" height="10"><path d="M4 3l8 8 8-8" stroke="#bbb" fill="none"/><path d="M40 12l6-6M74 10h8M78 6v6" stroke="#555" fill="none"/></svg>
<div class="sbtn" style="left:752px;width:72px"></div><div class="sb" style="left:758px;line-height:37px">跨图层选择</div>
<div class="sbtn" style="left:828px;width:60px"></div><div class="sb" style="left:834px;line-height:37px">折线选择</div>
</body></html>
